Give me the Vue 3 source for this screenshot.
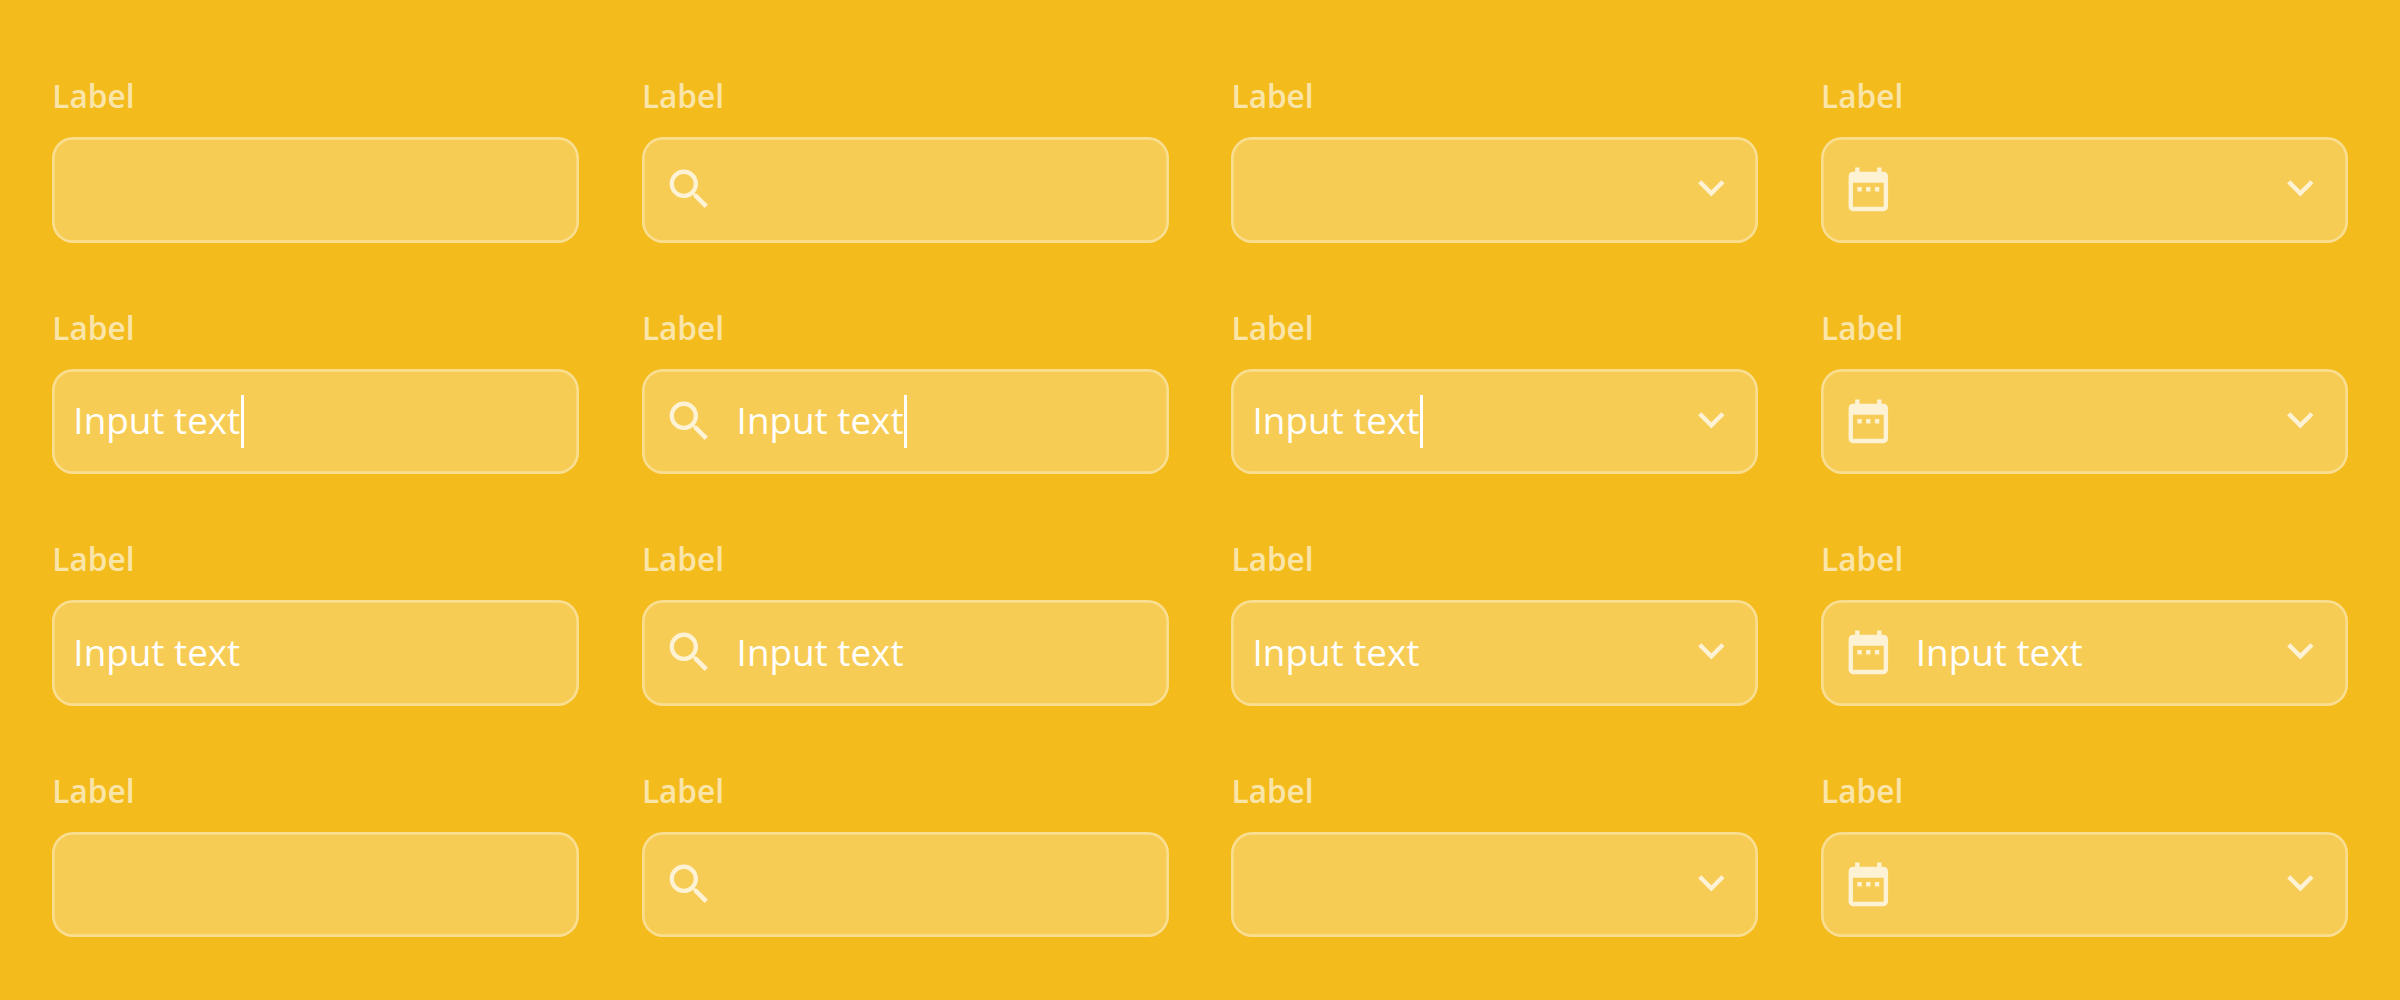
<template>
  <div class="field-grid">
    <div v-for="(field, index) in fields" :key="index" class="field">
      <div class="field-label">Label</div>
      <div class="field-box">
        <svg v-if="field.icon" class="icon" viewBox="0 0 24 24">
          <path :d="icons[field.icon]" />
        </svg>
        <div class="field-value">
          <span v-if="field.text" class="field-text">{{ field.text }}</span>
          <span v-if="field.focused" class="caret"></span>
        </div>
        <svg v-if="field.dropdown" class="icon" viewBox="0 0 24 24">
          <path :d="icons.chevron" />
        </svg>
      </div>
    </div>
  </div>
</template>

<script setup>
const icons = {
  search: 'M15.5 14h-.79l-.28-.27C15.41 12.59 16 11.11 16 9.5 16 5.91 13.09 3 9.5 3S3 5.91 3 9.5 5.91 16 9.5 16c1.61 0 3.09-.59 4.23-1.57l.27.28v.79l5 4.99L20.49 19l-4.99-5zm-6 0C7.01 14 5 11.99 5 9.5S7.01 5 9.5 5 14 7.01 14 9.5 11.99 14 9.5 14z',
  calendar: 'M9 11H7v2h2v-2zm4 0h-2v2h2v-2zm4 0h-2v2h2v-2zm2-7h-1V2h-2v2H8V2H6v2H5c-1.11 0-1.99.9-1.99 2L3 20c0 1.1.89 2 2 2h14c1.1 0 2-.9 2-2V6c0-1.1-.9-2-2-2zm0 16H5V9h14v11z',
  chevron: 'M7.41 7.84L12 12.42l4.59-4.58L18 9.25l-6 6-6-6z'
};

// One entry per column
const variants = [
  { icon: null, dropdown: false },
  { icon: 'search', dropdown: false },
  { icon: null, dropdown: true },
  { icon: 'calendar', dropdown: true }
];

const states = ['default', 'focused', 'filled', 'disabled'];

const fields = states.flatMap((state) =>
  variants.map((variant) => {
    const focused = state === 'focused' && variant.icon !== 'calendar';
    return {
      ...variant,
      focused,
      text: focused || state === 'filled' ? 'Input text' : ''
    };
  })
);
</script>

<style>
body {
  margin: 0;
  background-color: #f4bb1c;
}
</style>

<style scoped>
.field-grid {
  box-sizing: border-box;
  width: 2400px;
  height: 1000px;
  padding: 75px 52.3px 0;
  display: grid;
  grid-template-columns: repeat(4, 527px);
  grid-auto-rows: 167.5px;
  gap: 64.1px 62.6px;
  background-color: #f4bb1c;
  font-family: 'Open Sans', 'Noto Sans', sans-serif;
  overflow: hidden;
}

.field {
  display: flex;
  flex-direction: column;
}

.field-label {
  height: 42px;
  margin-bottom: 20px;
  font-size: 31.58px;
  font-weight: 600;
  line-height: 42px;
  color: rgba(255, 255, 255, 0.65);
}

.field-box {
  box-sizing: border-box;
  height: 105.5px;
  padding: 0 21.05px;
  display: flex;
  align-items: center;
  gap: 21.05px;
  border-radius: 21.05px;
  background-color: rgba(255, 255, 255, 0.25);
  box-shadow: inset 0 0 0 2.63px rgba(255, 255, 255, 0.35);
}

.icon {
  width: 52.63px;
  height: 52.63px;
  margin-bottom: 1px;
  flex-shrink: 0;
  fill: #fff;
  opacity: 0.75;
}

.field-value {
  flex: 1;
  display: flex;
  align-items: center;
}

.field-text {
  padding-bottom: 2px;
  font-size: 36.84px;
  line-height: 52.63px;
  color: #fff;
  white-space: nowrap;
}

.caret {
  width: 3px;
  height: 52.63px;
  margin-left: 0.4px;
  background-color: #fff;
}
</style>
